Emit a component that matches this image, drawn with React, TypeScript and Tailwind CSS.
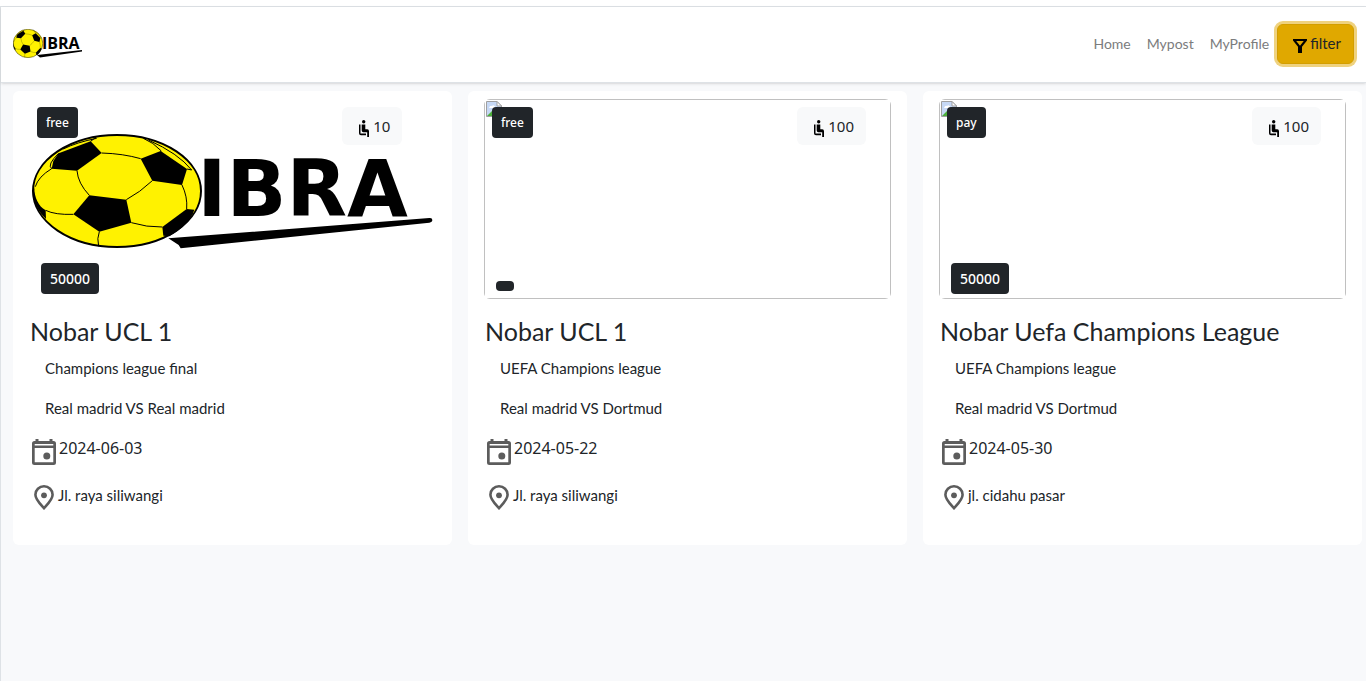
function Ball() {
  return (
    <g strokeLinejoin="round">
      <ellipse cx="351" cy="318" rx="252" ry="168" fill="#fff200" stroke="#000" strokeWidth="6" />
      <path d="M176 205L272 169L305 204L231 257L155 251L160 228Z" />
      <path d="M422 221L482 198L561 252L546 300L457 287Z" />
      <path d="M268 331L379 344L394 413L298 440L220 388Z" />
      <path d="M583 374L560 372L487 426L490 452L508 454C545 432 575 404 583 374Z" />
      <path d="M103 310C103 335 115 365 137 376L138 402C112 378 98 345 98 318Z" />
      <g fill="none" stroke="#000" strokeWidth="3">
        <path d="M305 204Q370 206 422 221M190 192Q230 172 290 160M272 169L290 155M430 160Q460 172 484 198M445 165Q535 205 575 255L561 252" />
        <path d="M231 257Q234 295 268 331M379 344Q420 322 457 287M546 300Q563 335 560 372M155 251Q115 275 106 305M155 251Q140 240 176 205" />
        <path d="M220 388Q165 390 137 376M394 413Q440 427 487 426M298 440Q290 460 296 484" />
      </g>
    </g>
  );
}

function LogoLarge() {
  return (
    <svg viewBox="87 42 1221 600" className="block h-full w-full" role="img" aria-label="IBRA">
      <Ball />
      <text x="592" y="392" fontFamily="DejaVu Sans, sans-serif" fontWeight="700" fontSize="236">IBRA</text>
      <path d="M505 460L1288 399Q1297 398 1297 405Q1297 412 1288 413L542 490L536 480Z" />
    </svg>
  );
}

function LogoSmall() {
  return (
    <svg viewBox="0 0 70 30" className="block h-[30px] w-[70px]" role="img" aria-label="IBRA">
      <svg x="0" y="0" width="30" height="29" viewBox="96 147 510 343" preserveAspectRatio="none">
        <Ball />
      </svg>
      <text x="29" y="20" fontFamily="Open Sans, sans-serif" fontWeight="700" fontSize="16">IBRA</text>
      <path d="M24 26L69 21V22.5L27 28.5Z" />
    </svg>
  );
}

function CalendarIcon() {
  return (
    <svg viewBox="0 0 24 26" className="block h-[26px] w-6 shrink-0" fill="#5c5c5c" aria-hidden="true">
      <path fillRule="evenodd" d="M3.500 0H6.500V2H17.500V0H20.500V2H21.500Q24 2 24 4.500V23.500Q24 26 21.500 26H2.500Q0 26 0 23.500V4.500Q0 2 2.500 2H3.500ZM2.700 5V6.400H21.300V5ZM2.700 9V23.200H21.300V9Z" />
      <circle cx="14.800" cy="17" r="3.500" />
    </svg>
  );
}

function PinIcon() {
  return (
    <svg viewBox="0 0 20 25" className="block h-[25px] w-5 shrink-0" aria-hidden="true">
      <path d="M10 23.200C6 18.800 1.400 14.300 1.400 9.700A8.600 8.400 0 0 1 18.600 9.700C18.600 14.300 14 18.800 10 23.200Z" fill="none" stroke="#5c5c5c" strokeWidth="2.600" />
      <circle cx="10" cy="10.300" r="2.900" fill="#5c5c5c" />
    </svg>
  );
}

function SeatIcon() {
  return (
    <svg viewBox="0 0 10 17" className="mt-1 block h-[17px] w-2.5 shrink-0" fill="#000" aria-hidden="true">
      <circle cx="4.700" cy="1.800" r="1.700" />
      <path d="M0 4.500H1.500V13.500H7V15.300H2Q0 15.300 0 13.300Z" />
      <path d="M2.700 4.500H6.300V9.300H8.300Q10 9.500 10 11.200V17H8.200V12.300H4.500Q2.700 12.300 2.700 10.500Z" />
    </svg>
  );
}

function FilterIcon() {
  return (
    <svg viewBox="0 0 14 14" className="mt-1 block h-3.5 w-3.5 shrink-0" aria-hidden="true">
      <path fillRule="evenodd" d="M0 0H14V1.500L9 7.800V14H5V7.800L0 1.500ZM3.200 2L7 6.700L10.800 2Z" />
    </svg>
  );
}

function BrokenImage() {
  return (
    <svg viewBox="0 0 16 16" className="m-px block h-4 w-4" aria-hidden="true">
      <path d="M.5.500H11L15.500 5V15.500H.5Z" fill="#c6d8f5" stroke="#a0a0a0" />
      <path d="M3 7Q4 4 6 5Q8 3 10 7Z" fill="#fff" />
      <path d="M1 15L6 10L11 15Z" fill="#4caf3a" />
      <path d="M11 .5V5H15.500Z" fill="#fff" stroke="#a0a0a0" />
    </svg>
  );
}

type Post = { kind: string; price: string; seats: number; title: string; league: string; match: string; date: string; place: string; logo?: boolean };

const posts: Post[] = [
  { kind: "free", price: "50000", seats: 10, title: "Nobar UCL 1", league: "Champions league final", match: "Real madrid VS Real madrid", date: "2024-06-03", place: "Jl. raya siliwangi", logo: true },
  { kind: "free", price: "", seats: 100, title: "Nobar UCL 1", league: "UEFA Champions league", match: "Real madrid VS Dortmud", date: "2024-05-22", place: "Jl. raya siliwangi" },
  { kind: "pay", price: "50000", seats: 100, title: "Nobar Uefa Champions League", league: "UEFA Champions league", match: "Real madrid VS Dortmud", date: "2024-05-30", place: "jl. cidahu pasar" },
];

function Card({ post }: { post: Post }) {
  return (
    <article className="relative rounded-md bg-white px-4 pt-2 pb-8">
      <div className="h-[200px] overflow-hidden rounded-md">
        {post.logo ? <LogoLarge /> : <div className="h-full border border-[#c0c0c0]"><BrokenImage /></div>}
      </div>
      <span className="absolute top-4 left-6 rounded bg-[#212529] px-[9px] py-1.5 font-['Noto_Sans',sans-serif] text-xs leading-[19px] font-medium text-white">{post.kind}</span>
      <span className="absolute top-4 left-3/4 flex h-[38px] items-center gap-1 rounded-md bg-[#f8f9fa] pr-3 pl-[17px] font-['Noto_Sans',sans-serif] text-[15px] text-[#212529]">
        <SeatIcon />
        {post.seats}
      </span>
      {post.price ? (
        <span className="absolute top-[172px] left-7 rounded bg-[#212529] px-[9px] py-1.5 font-['Noto_Sans',sans-serif] text-sm leading-[19px] font-medium text-white">{post.price}</span>
      ) : (
        <span className="absolute top-[190px] left-7 h-2.5 w-[18px] rounded bg-[#212529]" />
      )}
      <h2 className="mt-4 pl-px text-[25px] leading-[33px]">{post.title}</h2>
      <p className="mt-2 pl-4 leading-6">{post.league}</p>
      <p className="mt-4 pl-4 leading-6">{post.match}</p>
      <div className="mt-4 flex pl-[3px]">
        <div className="pt-[3px]"><CalendarIcon /></div>
        <p className="pl-[3px] font-['Noto_Sans',sans-serif] text-base leading-6">{post.date}</p>
      </div>
      <div className="mt-[18px] flex pb-[3px] pl-[5px]">
        <div className="pt-0.5"><PinIcon /></div>
        <p className="pl-1 leading-6">{post.place}</p>
      </div>
    </article>
  );
}

export default function App() {
  return (
    <div className="min-h-screen bg-white pt-1.5 font-[Lato,sans-serif] text-[15px] text-[#212529]">
      <div className="flex min-h-[calc(100vh-6px)] flex-col border-t border-l border-[#dee2e6] bg-[#f8f9fb]">
        <header className="flex h-[76px] items-center justify-between border-b border-[#dee2e6] bg-white px-3 pb-0.5 shadow-sm">
          <a href="#home"><LogoSmall /></a>
          <nav className="flex items-center text-sm text-[#7b7c7d]">
            <a href="#home" className="px-2">Home</a>
            <a href="#mypost" className="px-2">Mypost</a>
            <a href="#profile" className="px-2">MyProfile</a>
            <button type="button" className="flex h-10 items-center gap-[3px] rounded-md border border-[#d39e00] bg-[#e0a800] pr-3 pl-[15px] text-[15px] text-[#212529] ring-3 ring-[#efd27f]">
              <FilterIcon />
              filter
            </button>
          </nav>
        </header>
        <main className="grid grid-cols-3 gap-4 pt-2 pr-1 pl-3">
          {posts.map((post) => <Card key={post.title + post.date} post={post} />)}
        </main>
      </div>
    </div>
  );
}
